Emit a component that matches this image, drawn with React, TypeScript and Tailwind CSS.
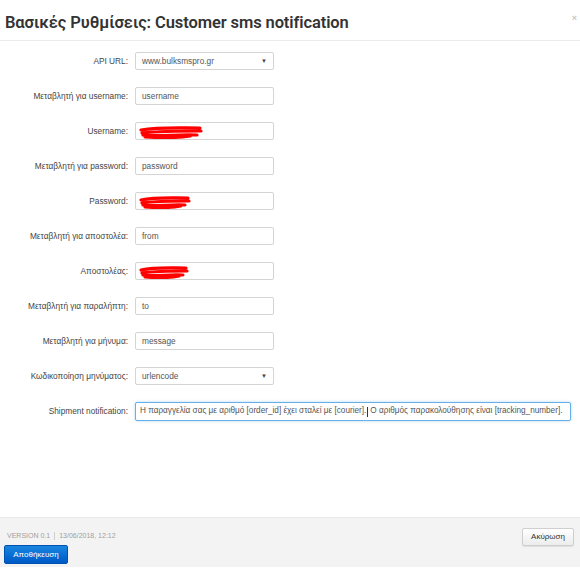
import React from 'react';

type Row = {
  label: string;
  value?: string;
  kind: 'input' | 'select' | 'hidden';
  scribble?: number;
};

const rows: Row[] = [
  { label: 'API URL:', value: 'www.bulksmspro.gr', kind: 'select' },
  { label: 'Μεταβλητή για username:', value: 'username', kind: 'input' },
  { label: 'Username:', kind: 'hidden', scribble: 64 },
  { label: 'Μεταβλητή για password:', value: 'password', kind: 'input' },
  { label: 'Password:', kind: 'hidden', scribble: 52 },
  { label: 'Μεταβλητή για αποστολέα:', value: 'from', kind: 'input' },
  { label: 'Αποστολέας:', kind: 'hidden', scribble: 50 },
  { label: 'Μεταβλητή για παραλήπτη:', value: 'to', kind: 'input' },
  { label: 'Μεταβλητή για μήνυμα:', value: 'message', kind: 'input' },
  { label: 'Κωδικοποίηση μηνύματος:', value: 'urlencode', kind: 'select' },
];

// red marker used to hide credentials in the screenshot
const Scribble = ({ width }: { width: number }) => (
  <svg width={width} height={14} viewBox={`0 0 ${width} 14`} className="absolute left-[3px] top-[2px]">
    <path
      d={`M2 5 C ${width * 0.3} 2, ${width * 0.6} 3, ${width - 3} 3 M3 8 C ${width * 0.35} 6, ${width * 0.7} 6, ${width - 2} 6 M4 10 C ${width * 0.3} 12, ${width * 0.6} 9, ${width - 6} 10 M6 12 C ${width * 0.4} 13, ${width * 0.7} 12, ${width * 0.8} 11`}
      stroke="#ff0000"
      strokeWidth={3.2}
      strokeLinecap="round"
      fill="none"
    />
  </svg>
);

const Field = ({ row }: { row: Row }) => {
  const base =
    'relative h-[18px] w-[139px] rounded-[2px] border border-[#d4d4d4] bg-white flex items-center px-[6px] text-[8.3px] text-[#555]';
  if (row.kind === 'select') {
    return (
      <div className={base + ' justify-between'}>
        <span>{row.value}</span>
        <span className="text-[6px] text-[#444]">▼</span>
      </div>
    );
  }
  return (
    <div className={base}>
      {row.value && <span>{row.value}</span>}
      {row.scribble && <Scribble width={row.scribble} />}
    </div>
  );
};

export default function App() {
  return (
    <div className="w-[580px] h-[580px] bg-white flex flex-col" style={{ fontFamily: '"Liberation Sans", Arial, sans-serif' }}>
      <div className="relative h-[41px] shrink-0 border-b border-[#ececec] pl-[5px] pt-[13px]">
        <h1 className="text-[16.5px] leading-[20px] text-[#333] tracking-[-0.1px]" style={{ fontFamily: 'Roboto, "Liberation Sans", sans-serif', fontWeight: 600 }}>
          Βασικές Ρυθμίσεις: Customer sms notification
        </h1>
        <span className="absolute right-[3px] top-[12px] text-[9px] text-[#c8c8c8] font-bold">×</span>
      </div>

      <div className="flex-1 pt-[11px] flex flex-col gap-[17px]">
        {rows.map((row) => (
          <div key={row.label} className="flex items-center">
            <div className="w-[128px] text-right text-[8.3px] text-[#444]">{row.label}</div>
            <div className="ml-[7px]">
              <Field row={row} />
            </div>
          </div>
        ))}
        <div className="flex items-center">
          <div className="w-[128px] text-right text-[8.3px] text-[#444]">Shipment notification:</div>
          <div className="ml-[7px] h-[19px] w-[436px] rounded-[2px] border border-[#66afe9] bg-white flex items-center px-[4px] text-[8.2px] text-[#555] whitespace-nowrap shadow-[0_0_3px_rgba(102,175,233,0.5)]">
            <span>Η παραγγελία σας με αριθμό [order_id] έχει σταλεί με [courier].</span>
            <span className="w-px h-[10px] bg-[#333] ml-[1px] mr-[2px]" />
            <span>Ο αριθμός παρακολούθησης είναι [tracking_number].</span>
          </div>
        </div>
      </div>

      <div className="h-[50px] shrink-0 bg-[#f3f3f3] border-t border-[#e8e8e8] flex justify-between pl-[4px] pr-[6px] pt-[9px]">
        <div className="flex flex-col">
          <div className="pl-[3px] text-[7px] text-[#a0a0a0] flex items-center gap-[4px] h-[18px]">
            <span>VERSION 0.1</span>
            <span className="w-px h-[8px] bg-[#cfcfcf]" />
            <span>13/06/2018, 12:12</span>
          </div>
          <button className="h-[19px] w-[64px] rounded-[2px] bg-gradient-to-b from-[#1a86e0] to-[#0059c8] border border-[#0052b0] text-white text-[8px]">
            Αποθήκευση
          </button>
        </div>
        <button className="mt-[1px] h-[18px] w-[52px] rounded-[2px] bg-gradient-to-b from-white to-[#ececec] border border-[#cfcfcf] text-[#333] text-[8px] shadow-[0_1px_1px_rgba(0,0,0,0.08)]">
          Ακύρωση
        </button>
      </div>
      <div className="h-[13px] shrink-0 bg-white" />
    </div>
  );
}
